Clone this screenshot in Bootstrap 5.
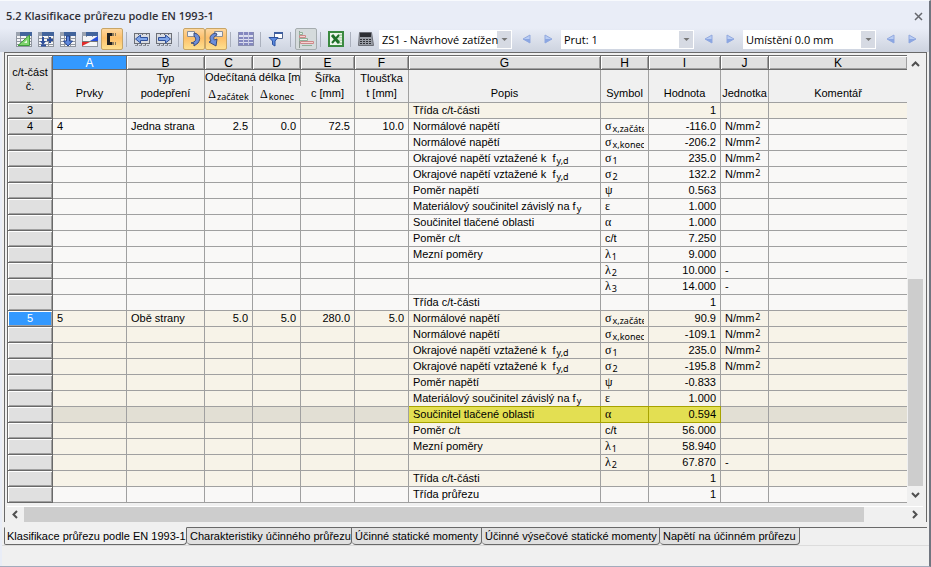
<!DOCTYPE html>
<html lang="cs">
<head>
<meta charset="utf-8">
<meta name="viewport" content="width=device-width, initial-scale=1">
<title>5.2 Klasifikace průřezu podle EN 1993-1</title>
<link rel="stylesheet" href="https://cdn.jsdelivr.net/npm/bootstrap@5.3.0/dist/css/bootstrap.min.css">
<style>
  body { font-family: "Liberation Sans", Arial, sans-serif; font-size: 11px; line-height: 15px; color: #000; background: #e9edf7; }
  .pane { border-top: 1px solid #f8fafd; border-right: 2px solid #70757f; border-bottom: 1px solid #a3abbc; }
  .pane-title { font: 600 11px/22px "Open Sans", "Noto Sans", sans-serif; color: #303038; margin: 0; }
  .pane-head { height: 27px; padding: 2px 4px 0 6px; }
  .pane-close { width: 14px; height: 20px; }
  .bare { border: 0; background: none; padding: 0; }

  .tools { height: 24px; padding: 0 5px 2px 13px; background: linear-gradient(#e9edf7, #cdd3df); }
  .tool { width: 22px; height: 22px; border: 1px solid transparent; border-radius: 2px; background: none; padding: 0; display: flex; align-items: center; justify-content: center; flex: none; }
  .tool.on { border-color: #c8a566; background: linear-gradient(#fdd7a0, #fdbf6a 45%, #fee08f); }
  .tool.held { border-color: #a5acaf; background: #d5dbdc; }
  .rule { width: 1px; height: 15px; margin: 0 4px 0 3px; background: #aab0bd; flex: none; }
  .pick { width: 133px; height: 19px; border: 0; border-radius: 0; padding: 0 13px 0 3px; margin-right: 3px; color: #000; flex: none; appearance: none;
    font: 11px/19px "Open Sans", "Noto Sans", sans-serif;
    background: url("data:image/svg+xml,%3Csvg xmlns='http://www.w3.org/2000/svg' width='14' height='17'%3E%3Cpath fill='%23d6dae3' d='M0 0h14v17H0z'/%3E%3Cpath fill='%23777' d='M4.500 7h6l-3 3z'/%3E%3C/svg%3E") no-repeat right 1px center #fff; }
  .pick-first { margin-left: 2px; }
  .step-last { margin-right: 2px; }

  .frame { margin: 0 2px; border: 1px solid #696969; border-bottom: 0; background: #f0f0f0; }
  .frame-in { padding: 2px 3px 0 2px; }
  .grid-box { border-top: 1px solid #696969; border-left: 1px solid #696969; min-width: 0; }
  table.sheet { width: 100%; table-layout: fixed; border-collapse: separate; border-spacing: 0; }
  .sheet th, .sheet td { padding: 0; font-weight: 400; border: 0 solid #a0a0a0; border-width: 0 1px 1px 0; white-space: nowrap; overflow: hidden; }
  .sheet td { height: 16px; padding: 0 4px; line-height: 15px; }
  .sheet th { background: #f0f0f0; text-align: center; vertical-align: bottom; line-height: 16px; }
  .sheet tr > :last-child { border-right: 0; }
  .sheet thead tr.letters th { height: 14px; line-height: 12px; font-size: 12px; background: #e0e0e0; border-color: #696969; box-shadow: inset 1px 1px #fff, inset -1px -1px #a0a0a0; }
  .sheet thead tr.letters th.cur { background: #3399ff; color: #fff; box-shadow: none; }
  .sheet thead tr.upper th { height: 16px; vertical-align: top; line-height: 14px; }
  .sheet thead tr.lower th { height: 17px; line-height: 15px; }
  .sheet thead th.corner, .sheet tbody th { background: #e0e0e0; border-color: #696969; box-shadow: inset 1px 1px #fff, inset -1px -1px #a0a0a0; }
  .sheet thead tr.letters th.corner { line-height: 14px; font-size: 11px; vertical-align: middle; }
  .sheet thead tr.upper th.cap { vertical-align: bottom; line-height: 15px; padding-bottom: 1px; }
  .sheet thead tr.lower th.konec { border-right-width: 1px; }
  .sheet tbody th { height: 16px; line-height: 15px; }
  .sheet tbody tr.now th { background: #3399ff; color: #fff; }
  .sheet td { background: #f9f8f7; }
  .sheet tr.warm td { background: #f7f3e8; }
  .sheet tr.picked td { background: #e2dfd4; }
  .sheet tr.picked td.glow { background: #e3df52; border-color: #a7a300; box-shadow: 0 -1px #a7a300; overflow: visible; }
  .num { text-align: right; }
  .clip { display: block; overflow: hidden; }
  .greek { font-family: "Liberation Serif", serif; font-size: 12px; }
  .low, .high { font-family: "Noto Sans", sans-serif; font-size: 9px; line-height: 0; vertical-align: -2px; margin-left: 1px; }
  .high { vertical-align: 2px; }
  .c-row { width: 45px; } .c-a { width: 74px; } .c-b { width: 78px; } .c-48 { width: 48px; } .c-54 { width: 54px; } .c-g { width: 192px; } .c-i { width: 72px; }

  .vbar { width: 16px; flex: none; }
  .vbar button { height: 17px; display: flex; align-items: center; justify-content: center; }
  .vtrack { display: flex; flex-direction: column; justify-content: flex-end; }
  .thumb { background: #cdcdcd; }
  .vtrack .thumb { height: 50%; margin-left: 1px; }
  .hbar { height: 16px; margin: 3px 0 5px 0; border-top: 1px solid #fff; }
  .hbar button { width: 16px; display: flex; align-items: center; justify-content: center; }
  .htrack .thumb { width: 95%; height: 100%; margin-left: 1px; }

  .sheets { margin: 0 2px; padding: 0; }
  .sheets .fill { border-top: 1px solid #696969; }
  .leaf { height: 18px; padding: 0 0 0 3px; text-align: left; white-space: nowrap; color: #000; background: #e0e0e0; border: 1px solid #696969; border-left: 0; border-radius: 0 0 4px 4px; line-height: 17px; }
  .leaf.active { background: #f0f0f0; border-top-color: #f0f0f0; border-left: 1px solid #696969; border-radius: 0 0 4px 2px; padding-left: 2px; }
  .w-1 { width: 183px; } .w-2 { width: 165px; } .w-3 { width: 130px; } .w-4 { width: 178px; } .w-5 { width: 140px; }
  .below { background: #f0f0f0; margin: 0 0 0 2px; }
  .status { height: 21px; border-top: 1px solid #dcdcdc; }
</style>
</head>
<body>
<svg class="d-none">
  <defs>
    <g id="base">
      <path fill="#f4f5f7" d="M0 1h16v15H0z"/>
      <path fill="none" stroke="#8f959f" d="M0 7.500h16M0 10.500h16M0 13.500h16M4.500 4v12M10.500 4v12M.500 4v12M15.500 4v12M0 15.500h16"/>
      <path fill="#42649c" d="M4 1h12v4H4z"/><path fill="#9ba3b0" d="M0 1h4v4H0z"/>
    </g>
    <g id="strip">
      <path fill="#d9dce2" d="M0 2h16v11H0z"/>
      <path fill="none" stroke="#6c6f77" d="M0 2.500h16M0 12.500h16M.500 2v11M15.500 2v11M4.500 2v2M8.500 2v2M12.500 2v2M3.500 13v2M7.500 13v2M11.500 13v2"/>
      <path stroke="#8b8f98" stroke-dasharray="3 1" d="M1 14.500h14"/>
    </g>
    <g id="tri-l"><path fill="#b9cdf4" stroke="#93a9de" stroke-linejoin="round" d="M8 1v8L1 5z"/><path fill="#8ba6e2" d="M8 5v4L1 5z"/></g>
    <g id="tri-r"><path fill="#b9cdf4" stroke="#93a9de" stroke-linejoin="round" d="M1 1v8l7-4z"/><path fill="#8ba6e2" d="M1 5v4l7-4z"/></g>
  </defs>
</svg>

<main class="pane">
  <header class="pane-head d-flex justify-content-between align-items-center">
    <h1 class="pane-title">5.2 Klasifikace průřezu podle EN 1993-1</h1>
    <button class="bare pane-close" aria-label="Zavřít"><svg width="9" height="9"><path stroke="#66686e" stroke-width="1.500" d="M1 1l7 7M8 1L1 8"/></svg></button>
  </header>

  <div class="tools d-flex align-items-center" role="toolbar" aria-label="Nástroje tabulky">
    <button class="tool" aria-label="Geometrie"><svg width="16" height="17"><use href="#base"/><path fill="#7ed36c" stroke="#3c9b3a" d="M13.500 4v10.500H2z"/><path fill="#e8f7e4" d="M11 9v3H8z"/></svg></button>
    <button class="tool" aria-label="Vložit řádek"><svg width="16" height="17"><use href="#base"/><path fill="none" stroke="#2d4f9c" stroke-width="2" d="M5 6v6M3 14.500h5M9 9h6M12 6v6"/><path fill="#2d4f9c" d="M2 10h6l-3 4z"/></svg></button>
    <button class="tool" aria-label="Přesunout dolů"><svg width="16" height="17"><use href="#base"/><path fill="#5f88dc" stroke="#23428c" d="M6.500 5h3v5h3l-4.500 5L3.500 10h3z"/></svg></button>
    <button class="tool" aria-label="Průběhy"><svg width="16" height="17"><use href="#base"/><path fill="#f4f5f7" d="M1 6h14v9H1z"/><path fill="#2b50d8" d="M16 5v5H8z"/><path fill="#e02b2b" d="M0 15v-4h8z"/><path stroke="#777" d="M0 10.500h16"/></svg></button>
    <button class="tool on" aria-label="Průřez" aria-pressed="true"><svg width="16" height="16"><path fill="none" stroke="#222" stroke-width="3" d="M8 3.500H4.500v9H8"/><path stroke="#8a7a5c" stroke-width="3" stroke-dasharray="2 1" d="M8 3.500h4M8 12.500h4"/></svg></button>
    <span class="rule"></span>
    <button class="tool" aria-label="Předchozí tabulka"><svg width="16" height="16"><use href="#strip"/><path fill="#7fa6ea" stroke="#2e4f9a" d="M1.500 8l5-4v2.500h7v3h-7V12z"/></svg></button>
    <button class="tool" aria-label="Další tabulka"><svg width="16" height="16"><use href="#strip"/><path fill="#7fa6ea" stroke="#2e4f9a" d="M14.500 8l-5-4v2.500h-7v3h7V12z"/></svg></button>
    <span class="rule"></span>
    <button class="tool on" aria-label="Výběr v modelu" aria-pressed="true"><svg width="18" height="18"><path fill="#f0f2f6" stroke="#888d98" d="M2.500 1.500h7v5h-7z"/><path fill="#6d8edb" stroke="#3d4c78" d="M9 3c6 1 7 6 4 10l-4 3 0-2.500-3-.500c5-1 6-4 3-7z"/></svg></button>
    <button class="tool on" aria-label="Výběr v tabulce" aria-pressed="true"><svg width="18" height="18"><path fill="#f0f2f6" stroke="#888d98" d="M7.500 1.500h8v5h-8z"/><path fill="#6d8edb" stroke="#3d4c78" d="M9 3C3 4 2 8 4 11l-2 1 7 4 1-7-2.500 1C6 8 7 6 10 5z"/></svg></button>
    <span class="rule"></span>
    <button class="tool" aria-label="Barvy tabulky"><svg width="16" height="16"><path fill="#dcdff0" d="M0 1h16v14H0z"/><path fill="#8488bf" d="M0 1h16v3H0zM0 6h16v2H0zM0 9h16v2H0zM0 12h16v2H0z"/><path stroke="#c9cce2" d="M5.500 1v14M10.500 1v14"/><path fill="none" stroke="#8a8fae" d="M.500 1v14M15.500 1v14M0 14.500h16"/></svg></button>
    <span class="rule"></span>
    <button class="tool" aria-label="Filtr"><svg width="16" height="16"><path fill="#fff" stroke="#50648f" d="M6.500 1.500h8v6h-8z"/><path fill="#3f5fa0" d="M6 1h9v2H6z"/><path fill="#5c8be0" stroke="#2b519f" d="M1 6.500h9L7 10v5l-2.500-1.500V10z"/></svg></button>
    <span class="rule"></span>
    <button class="tool held" aria-label="Grafy" aria-pressed="true"><svg width="18" height="17"><path stroke="#8f9a93" d="M2.500 0v17"/><path fill="#e8f1ea" stroke="#8fb098" d="M2.500 1.500h3v2h-3zM2.500 7.500h8v2h-8z"/><path fill="#f6d4d3" stroke="#cc8a8a" d="M2.500 4.500h6v2h-6zM3.500 10.500h13v2h-13z"/><path stroke="#8fb098" d="M5 14.500h10"/></svg></button>
    <span class="rule"></span>
    <button class="tool" aria-label="Export do Excelu"><svg width="16" height="16"><path fill="#eef6ec" stroke="#3b8a41" stroke-width="2" d="M1 1h14v14H1z"/><path fill="#b9d9b6" d="M10 3h4v10h-4z"/><path stroke="#eef6ec" d="M10 5.500h4M10 8h4M10 10.500h4"/><path stroke="#1f7029" stroke-width="3" d="M4 4l7 8"/><path stroke="#1f7029" stroke-width="2" d="M11 4l-7 8"/></svg></button>
    <span class="rule"></span>
    <button class="tool" aria-label="Kalkulačka"><svg width="16" height="14"><path fill="#9a9ea6" stroke="#6a6d75" d="M1.500.500h12l2 13H.500z"/><path fill="#2c2e33" d="M2 1h11v4H2z"/><path fill="#2f3137" d="M2 7h2v1H2zM5 7h2v1H5zM8 7h2v1H8zM11 7h2v1h-2zM2 9h2v1H2zM5 9h2v1H5zM8 9h2v1H8zM11 9h2v1h-2zM2 11h2v1H2zM5 11h2v1H5zM8 11h2v1H8zM11 11h2v1h-2z"/></svg></button>
    <select class="pick pick-first" aria-label="Zatěžovací stav"><option>ZS1 - Návrhové zatížen</option></select>
    <button class="tool" aria-label="Předchozí stav"><svg width="9" height="10"><use href="#tri-l"/></svg></button>
    <button class="tool step-last" aria-label="Další stav"><svg width="9" height="10"><use href="#tri-r"/></svg></button>
    <select class="pick" aria-label="Prut"><option>Prut: 1</option></select>
    <button class="tool" aria-label="Předchozí prut"><svg width="9" height="10"><use href="#tri-l"/></svg></button>
    <button class="tool step-last" aria-label="Další prut"><svg width="9" height="10"><use href="#tri-r"/></svg></button>
    <select class="pick" aria-label="Umístění"><option>Umístění 0.0 mm</option></select>
    <button class="tool" aria-label="Předchozí místo"><svg width="9" height="10"><use href="#tri-l"/></svg></button>
    <button class="tool" aria-label="Další místo"><svg width="9" height="10"><use href="#tri-r"/></svg></button>
  </div>

  <div class="below">
    <section class="frame">
      <div class="frame-in">
        <div class="d-flex">
          <div class="grid-box flex-grow-1">
            <table class="sheet">
              <colgroup><col class="c-row"><col class="c-a"><col class="c-b"><col class="c-48"><col class="c-48"><col class="c-54"><col class="c-54"><col class="c-g"><col class="c-48"><col class="c-i"><col class="c-48"><col></colgroup>
              <thead>
                <tr class="letters"><th class="corner" rowspan="3">c/t-část<br>č.</th><th class="cur">A</th><th>B</th><th>C</th><th>D</th><th>E</th><th>F</th><th>G</th><th>H</th><th>I</th><th>J</th><th>K</th></tr>
                <tr class="upper"><th class="cap" rowspan="2">Prvky</th><th class="cap" rowspan="2">Typ<br>podepření</th><th class="border-bottom-0" colspan="2">Odečítaná délka [mm]</th><th class="cap" rowspan="2">Šířka<br>c [mm]</th><th class="cap" rowspan="2">Tloušťka<br>t [mm]</th><th class="cap" rowspan="2">Popis</th><th class="cap" rowspan="2">Symbol</th><th class="cap" rowspan="2">Hodnota</th><th class="cap" rowspan="2">Jednotka</th><th class="cap" rowspan="2">Komentář</th></tr>
                <tr class="lower"><th><span class="greek">Δ</span><span class="low">začátek</span></th><th class="konec"><span class="greek">Δ</span><span class="low">konec</span></th></tr>
              </thead>
              <tbody id="rows"></tbody>
            </table>
          </div>
          <div class="vbar d-flex flex-column">
            <button class="bare w-100" aria-label="Nahoru"><svg width="9" height="6"><path fill="none" stroke="#505050" stroke-width="2" d="M1 5l3.500-3.500L8 5"/></svg></button>
            <div class="vtrack flex-grow-1"><div class="thumb"></div></div>
            <button class="bare w-100" aria-label="Dolů"><svg width="9" height="6"><path fill="none" stroke="#505050" stroke-width="2" d="M1 1l3.500 3.500L8 1"/></svg></button>
          </div>
        </div>
        <div class="hbar d-flex">
          <button class="bare" aria-label="Vlevo"><svg width="6" height="9"><path fill="none" stroke="#505050" stroke-width="2" d="M5 1L1.500 4.500 5 8"/></svg></button>
          <div class="htrack flex-grow-1"><div class="thumb"></div></div>
          <button class="bare" aria-label="Vpravo"><svg width="6" height="9"><path fill="none" stroke="#505050" stroke-width="2" d="M1 1l3.500 3.500L1 8"/></svg></button>
        </div>
      </div>
    </section>
    <nav class="sheets d-flex" role="tablist" aria-label="Tabulky">
      <button class="leaf active w-1" role="tab" aria-selected="true">Klasifikace průřezu podle EN 1993-1</button>
      <button class="leaf w-2" role="tab">Charakteristiky účinného průřezu</button>
      <button class="leaf w-3" role="tab">Účinné statické momenty</button>
      <button class="leaf w-4" role="tab">Účinné výsečové statické momenty</button>
      <button class="leaf w-5" role="tab">Napětí na účinném průřezu</button>
      <span class="fill flex-grow-1"></span>
    </nav>
    <footer class="status"></footer>
  </div>
</main>

<script src="https://cdn.jsdelivr.net/npm/bootstrap@5.3.0/dist/js/bootstrap.bundle.min.js"></script>
<script>
  const low = t => `<span class="low">${t}</span>`;
  const greek = (g, t = '') => `<span class="greek">${g}</span>${t && low(t)}`;
  const stress = 'N/mm<span class="high">2</span>';
  const limit = 'Okrajové napětí vztažené k&nbsp; f' + low('y,d');
  const material = 'Materiálový součinitel závislý na f' + low('y');
  const partClass = 'Třída c/t-části';

  // label, A–F, G description, H symbol, I value, J unit, row class
  const rows = [
    ['3', [], partClass, '', '1', '', 'warm'],
    ['4', ['4', 'Jedna strana', '2.5', '0.0', '72.5', '10.0'], 'Normálové napětí', greek('σ', 'x,začátek'), '-116.0', stress, ''],
    ['', [], 'Normálové napětí', greek('σ', 'x,konec'), '-206.2', stress, ''],
    ['', [], limit, greek('σ', '1'), '235.0', stress, ''],
    ['', [], limit, greek('σ', '2'), '132.2', stress, ''],
    ['', [], 'Poměr napětí', greek('ψ'), '0.563', '', ''],
    ['', [], material, greek('ε'), '1.000', '', ''],
    ['', [], 'Součinitel tlačené oblasti', greek('α'), '1.000', '', ''],
    ['', [], 'Poměr c/t', 'c/t', '7.250', '', ''],
    ['', [], 'Mezní poměry', greek('λ', '1'), '9.000', '', ''],
    ['', [], '', greek('λ', '2'), '10.000', '-', ''],
    ['', [], '', greek('λ', '3'), '14.000', '-', ''],
    ['', [], partClass, '', '1', '', ''],
    ['5', ['5', 'Obě strany', '5.0', '5.0', '280.0', '5.0'], 'Normálové napětí', greek('σ', 'x,začátek'), '90.9', stress, 'warm now'],
    ['', [], 'Normálové napětí', greek('σ', 'x,konec'), '-109.1', stress, 'warm'],
    ['', [], limit, greek('σ', '1'), '235.0', stress, 'warm'],
    ['', [], limit, greek('σ', '2'), '-195.8', stress, 'warm'],
    ['', [], 'Poměr napětí', greek('ψ'), '-0.833', '', 'warm'],
    ['', [], material, greek('ε'), '1.000', '', 'warm'],
    ['', [], 'Součinitel tlačené oblasti', greek('α'), '0.594', '', 'picked'],
    ['', [], 'Poměr c/t', 'c/t', '56.000', '', 'warm'],
    ['', [], 'Mezní poměry', greek('λ', '1'), '58.940', '', 'warm'],
    ['', [], '', greek('λ', '2'), '67.870', '-', 'warm'],
    ['', [], partClass, '', '1', '', 'warm'],
    ['', [], 'Třída průřezu', '', '1', '', '']
  ];

  document.getElementById('rows').innerHTML = rows.map(([label, left, text, symbol, value, unit, cls]) => {
    const glow = cls === 'picked' ? ' glow' : '';
    const first = [0, 1, 2, 3, 4, 5].map(i => `<td class="${i > 1 ? 'num' : ''}">${left[i] || ''}</td>`).join('');
    return `<tr class="${cls}"><th scope="row">${label}</th>${first}<td class="${glow}">${text}</td>` +
      `<td class="${glow}"><span class="clip">${symbol}</span></td><td class="num${glow}">${value}</td><td>${unit}</td><td></td></tr>`;
  }).join('');
</script>
</body>
</html>
